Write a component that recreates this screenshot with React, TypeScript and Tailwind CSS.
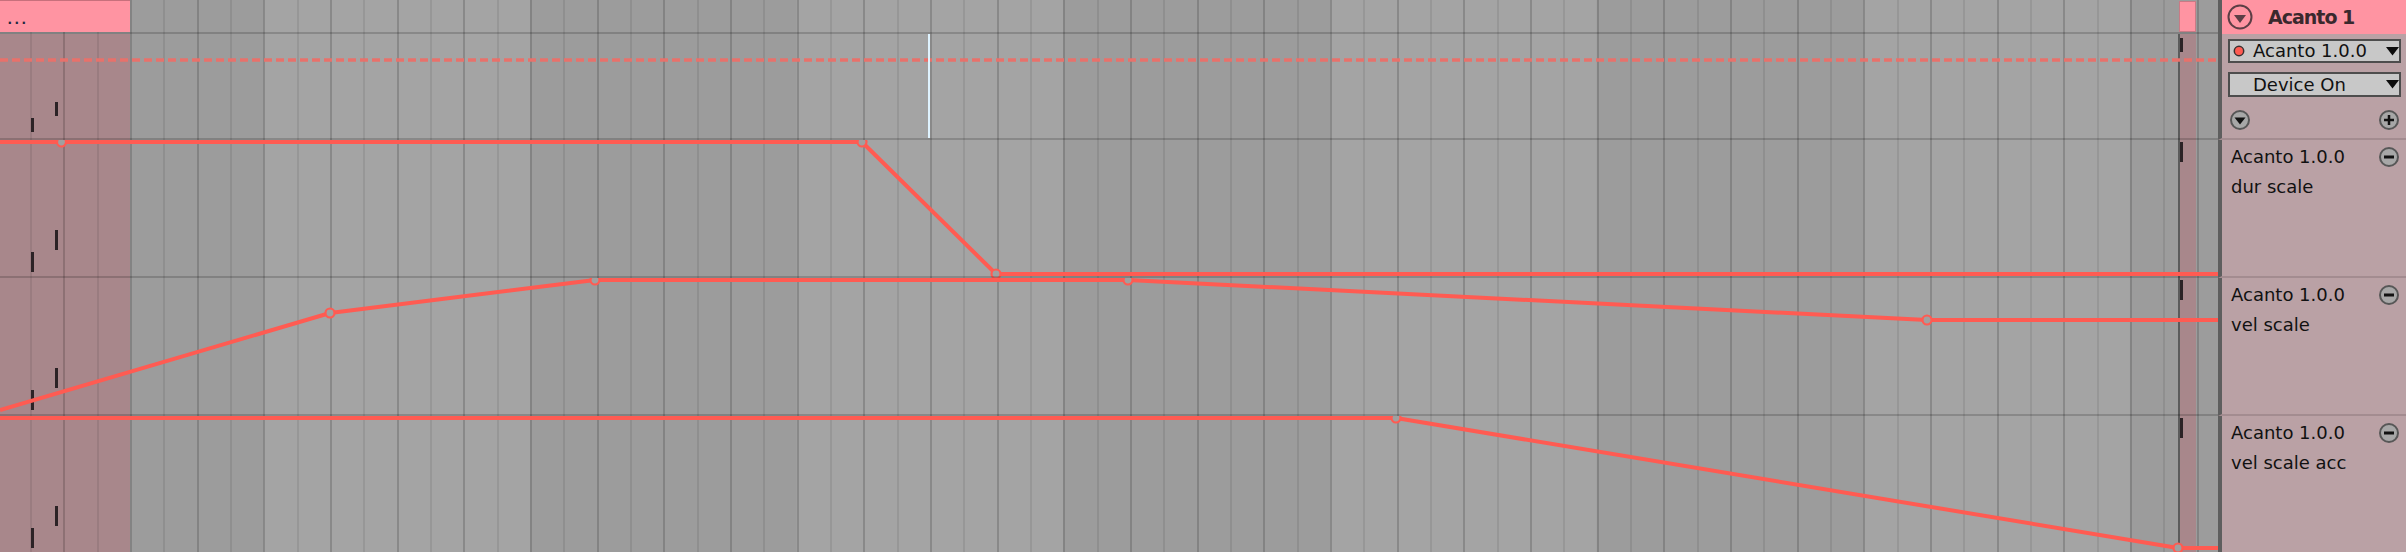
import React from 'react';

const W = 2218;
const RED = '#ff5b52';
const GRID_X = Array.from({ length: 67 }, (_, i) => 30 + (i * 100) / 3).filter((x) => x < W);
const LIGHT_BANDS = [0, 1, 2, 3].map((k) => 263.33 + 533.33 * k);

type Pt = [number, number];
type Tick = [number, number, number];

function Grid({ h, header = false }: { h: number; header?: boolean }) {
  return (
    <>
      <rect width={W} height={h} fill="#9c9c9c" />
      {LIGHT_BANDS.map((x) => (
        <rect key={x} x={x} width={266.67} height={h} fill="#a4a4a4" />
      ))}
      {!header && <rect width={130} height={h} fill="#a8878b" />}
      {!header && <rect x={2180} width={16} height={h} fill="#a8878b" />}
      {GRID_X.map((x, i) => (
        <rect
          key={i}
          x={Math.round(x)}
          width={2}
          height={h}
          fill={i % 2 ? 'rgba(0,0,0,0.16)' : 'rgba(0,0,0,0.08)'}
        />
      ))}
      {!header && <rect x={2178} width={2} height={h} fill="#5b5b5b" />}
    </>
  );
}

function Lane({
  h,
  pts,
  dots = [],
  ticks,
  bottomLine = true,
  children,
}: {
  h: number;
  pts?: Pt[];
  dots?: Pt[];
  ticks: Tick[];
  bottomLine?: boolean;
  children?: React.ReactNode;
}) {
  return (
    <svg width={W} height={h} className="block shrink-0">
      <Grid h={h} />
      {ticks.map(([x, y, th], i) => (
        <rect key={i} x={x} y={y} width={3} height={th} fill="#2c2326" />
      ))}
      {children}
      {pts && (
        <polyline
          points={pts.map((p) => p.join(',')).join(' ')}
          fill="none"
          stroke={RED}
          strokeWidth={4}
          strokeLinejoin="round"
        />
      )}
      {dots.map(([x, y], i) => (
        <circle key={i} cx={x} cy={y} r={4.5} fill="#a0a0a0" stroke={RED} strokeWidth={2.2} />
      ))}
      {bottomLine && <rect y={h - 2} width={W} height={2} fill="rgba(0,0,0,0.17)" />}
    </svg>
  );
}

function CircleBtn({ kind }: { kind: 'down' | 'plus' | 'minus' }) {
  return (
    <svg width={20} height={20} className="block shrink-0">
      <circle cx={10} cy={10} r={9} fill="#a7a7a7" stroke="#575757" strokeWidth={2} />
      {kind === 'down' && <path d="M4.5 7.5 H15.5 L10 14.5 Z" fill="#111" />}
      {kind === 'minus' && <rect x={5} y={8.5} width={10} height={3} fill="#111" />}
      {kind === 'plus' && (
        <>
          <rect x={5} y={8.75} width={10} height={2.5} fill="#111" />
          <rect x={8.75} y={5} width={2.5} height={10} fill="#111" />
        </>
      )}
    </svg>
  );
}

function DropTri() {
  return (
    <svg width={13} height={9} className="block shrink-0">
      <path d="M0 0 H13 L6.5 8.5 Z" fill="#0c0c0c" />
    </svg>
  );
}

function ParamCell({ name }: { name: string }) {
  return (
    <div className="flex h-full justify-between pl-[9px] pr-[7px] pt-[2px]">
      <div className="text-[18px] leading-[30px] text-[#111]">
        <div>Acanto 1.0.0</div>
        <div>{name}</div>
      </div>
      <div className="mt-[5px]">
        <CircleBtn kind="minus" />
      </div>
    </div>
  );
}

const panelCell = 'w-[188px] shrink-0 border-l-4 border-l-[#5e5e5e] bg-[#baa1a5]';

export default function App() {
  return (
    <div className="flex h-[552px] w-[2406px] flex-col overflow-hidden bg-[#9c9c9c] font-['DejaVu_Sans',sans-serif]">
      {/* clip header row */}
      <div className="flex h-[34px]">
        <svg width={W} height={34} className="block shrink-0">
          <Grid h={34} header />
          <rect x={0} y={0} width={130} height={32} fill="#ff94a2" />
          <rect x={0} y={0} width={130} height={1} fill="#c7707c" />
          <text
            x={7.5}
            y={23.5}
            fontSize={12}
            letterSpacing={2.5}
            fill="#232840"
            fontFamily="DejaVu Sans, sans-serif"
            fontWeight="bold"
          >
            ...
          </text>
          <rect x={2179.5} y={1.5} width={16} height={30} fill="#ff94a2" stroke="#c97a85" strokeWidth={1} />
          <rect y={32} width={W} height={2} fill="rgba(0,0,0,0.17)" />
        </svg>
        <div className={`${panelCell} flex items-center bg-[#ff94a2] pl-[5px]`}>
          <svg width={26} height={26} className="block shrink-0">
            <circle cx={13} cy={13} r={11.5} fill="none" stroke="#5c3e45" strokeWidth={2} />
            <path d="M7 11 H19 L13 19 Z" fill="#5c3e45" />
          </svg>
          <span className="ml-[15px] text-[19px] font-bold tracking-[-1px] text-[#3a282d]">Acanto 1</span>
        </div>
      </div>

      {/* device lane */}
      <div className="flex h-[106px]">
        <Lane h={106} ticks={[[55, 68, 14], [31, 84, 14], [2180, 4, 14]]}>
          <line x1={0} y1={26} x2={W} y2={26} stroke="#e8716b" strokeWidth={3.5} strokeDasharray="8 4" />
          <rect x={928} y={0} width={2} height={104} fill="#dff3ff" />
        </Lane>
        <div className={`${panelCell} flex flex-col border-b-2 border-b-[#a38c90] pl-[6px] pr-[5px] pt-[5px]`}>
          <div className="flex h-[24px] items-center border-2 border-[#4d4d4d] bg-[#c8c8c8] pl-[3px]">
            <svg width={12} height={12} className="block shrink-0">
              <circle cx={6} cy={6} r={4.7} fill={RED} stroke="#3a3030" strokeWidth={1.5} />
            </svg>
            <span className="ml-[8px] flex-1 text-[18px] leading-none text-[#111]">Acanto 1.0.0</span>
            <DropTri />
          </div>
          <div className="mt-[9px] flex h-[25px] items-center border-2 border-[#4d4d4d] bg-[#c8c8c8] pl-[23px]">
            <span className="flex-1 text-[18px] leading-none text-[#111]">Device On</span>
            <DropTri />
          </div>
          <div className="mt-[13px] flex justify-between pl-[2px] pr-[2px]">
            <CircleBtn kind="down" />
            <CircleBtn kind="plus" />
          </div>
        </div>
      </div>

      {/* dur scale */}
      <div className="flex h-[138px]">
        <Lane
          h={138}
          ticks={[[55, 90, 20], [31, 112, 20], [2180, 2, 20]]}
          pts={[[0, 2], [61.5, 2], [862, 2], [996, 134], [W, 134]]}
          dots={[[61.5, 2], [862, 2], [996, 134]]}
        />
        <div className={`${panelCell} border-b-2 border-b-[#a38c90]`}>
          <ParamCell name="dur scale" />
        </div>
      </div>

      {/* vel scale */}
      <div className="flex h-[138px]">
        <Lane
          h={138}
          ticks={[[55, 90, 20], [31, 112, 20], [2180, 2, 20]]}
          pts={[[0, 132], [330, 35], [595, 2], [1128, 2], [1927, 42], [W, 42]]}
          dots={[[330, 35], [595, 2], [1128, 2], [1927, 42]]}
        />
        <div className={`${panelCell} border-b-2 border-b-[#a38c90]`}>
          <ParamCell name="vel scale" />
        </div>
      </div>

      {/* vel scale acc */}
      <div className="flex h-[136px]">
        <Lane
          h={136}
          bottomLine={false}
          ticks={[[55, 90, 20], [31, 112, 20], [2180, 2, 20]]}
          pts={[[0, 2], [1396, 2], [2178, 132], [W, 132]]}
          dots={[[1396, 2], [2178, 132]]}
        />
        <div className={panelCell}>
          <ParamCell name="vel scale acc" />
        </div>
      </div>
    </div>
  );
}
